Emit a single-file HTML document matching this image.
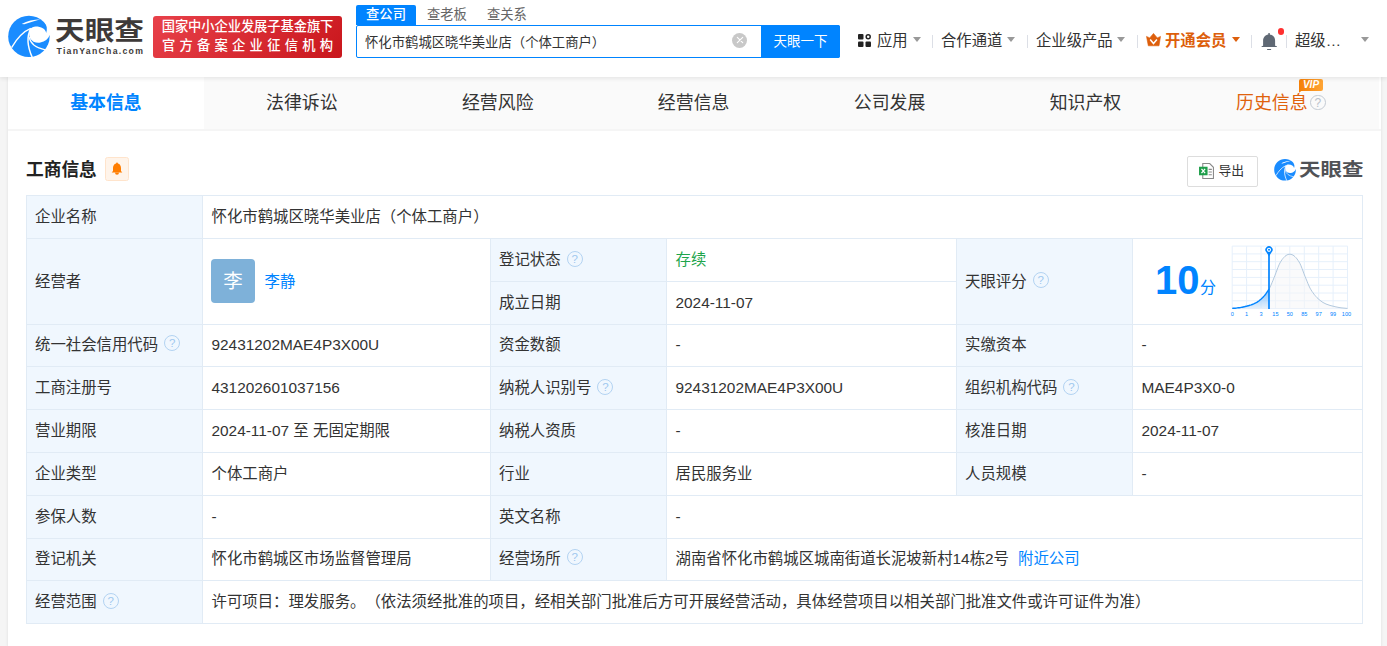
<!DOCTYPE html>
<html lang="zh-CN">
<head>
<meta charset="utf-8">
<title>天眼查</title>
<style>
*{box-sizing:border-box;margin:0;padding:0}
html,body{width:1387px;height:646px;overflow:hidden;background:#f5f5f5}
body{text-spacing-trim:space-all;font-family:"Liberation Sans","Noto Sans CJK SC",sans-serif;color:#333;font-size:14px;position:relative}
.abs{position:absolute}
#header{position:absolute;left:0;top:0;width:1387px;height:77px;background:#fff;box-shadow:0 2px 4px rgba(0,0,0,.08);z-index:5}
#main{position:absolute;left:8px;top:77px;width:1373px;height:570px;background:#fff;box-shadow:0 0 3px rgba(0,0,0,.10)}
.t{position:absolute;white-space:nowrap;line-height:20px}
/* header */
.logo-cn{left:54.7px;top:12.8px;font-size:29.5px;font-weight:700;color:#3e3a39;line-height:36px;letter-spacing:0px;transform:scale(1.005,.87);transform-origin:0 50%}
.logo-en{left:56.5px;top:44.8px;font-size:8.7px;font-weight:700;color:#3e3a39;line-height:12px;letter-spacing:1.27px}
.badge{left:153px;top:16px;width:189px;height:42px;border-radius:3px;background:linear-gradient(135deg,#e8414a 0%,#c9161c 100%);color:#fff}
.badge div{position:absolute;left:0;width:189px;text-align:center;white-space:nowrap;font-size:13.3px;line-height:16px;font-weight:500}
.stab{top:5px;height:20px;line-height:19.5px;font-size:13.3px;color:#666}
.stab.on{left:356px;width:60px;background:#0084ff;color:#fff;text-align:center;border-radius:2px 2px 0 0;font-weight:500}
.sbox{left:356px;top:25px;width:484px;height:33px;border:1.5px solid #0084ff;border-radius:2px;background:#fff}
.sbtn{left:761px;top:25px;width:79px;height:33px;background:#0084ff;color:#fff;font-size:13.5px;line-height:33px;text-align:center;border-radius:0 2px 2px 0}
.nav{top:31px;font-size:15.35px;color:#333;line-height:20px}
.sep{top:34.5px;width:1px;height:13px;background:#dcdfe6}
.caret{width:0;height:0;border-left:4px solid transparent;border-right:4px solid transparent;border-top:5px solid #999}
/* tabs */
.tab{top:77px;height:51.7px;width:196px;background:#fafafa;text-align:center;font-size:17.9px;line-height:52px;color:#333}
.tab.on{background:#fff;color:#0084ff;font-weight:700}
/* table */
.cell{position:absolute;border:1px solid #e1ebf5;background:#fff}
.lab{background:#f0f7fe}
.cell .t{font-size:15.4px;line-height:20px;color:#333}
.q{display:inline-block;width:16px;height:16px;border:1.3px solid #b3d3f2;border-radius:50%;color:#9fc8ef;font-size:11.5px;line-height:15.6px;text-align:center;vertical-align:0px;position:relative;top:-2.5px;margin-left:6px;font-family:"Liberation Sans",sans-serif}
a{color:#0084ff;text-decoration:none}
</style>
</head>
<body>
<div id="header">
  <svg class="abs" style="left:4px;top:12px" width="52" height="50" viewBox="0 0 672 646">
    <circle cx="322" cy="315" r="268" fill="#1a8cff"/>
    <path d="M545 272 C538 215 480 186 410 186 C380 186 355 200 340 215 C322 260 322 300 335 335 C360 385 420 405 470 395 C530 385 570 350 592 298 L620 298 L620 130 L530 140 C555 175 561 225 545 272 Z" fill="#fff"/>
    <path d="M228 154 C300 114 380 96 472 92 C400 112 330 136 262 158 Z" fill="#fff"/>
    <path d="M98 460 C150 370 230 260 346 212" stroke="#fff" stroke-width="18" fill="none"/>
    <path d="M346 214 C300 300 290 420 366 588" stroke="#fff" stroke-width="19" fill="none"/>
    <path d="M325 325 C345 420 430 470 532 488" stroke="#fff" stroke-width="16" fill="none"/>
  </svg>
  <div class="t logo-cn">天眼查</div>
  <div class="t logo-en">TianYanCha.com</div>
  <div class="abs badge">
    <div style="top:3px;letter-spacing:-.1px">国家中小企业发展子基金旗下</div>
    <div style="top:21.5px;letter-spacing:4.25px;padding-left:4.25px">官方备案企业征信机构</div>
  </div>
  <div class="t stab on">查公司</div>
  <div class="t stab" style="left:427px">查老板</div>
  <div class="t stab" style="left:487px">查关系</div>
  <div class="abs sbox"></div>
  <div class="t" style="left:365px;top:32.5px;font-size:13.35px;color:#333">怀化市鹤城区晓华美业店（个体工商户）</div>
  <div class="abs" style="left:731.8px;top:32.7px;width:15.4px;height:15.4px;border-radius:50%;background:#c8c8c8"></div>
  <svg class="abs" style="left:731.5px;top:32.4px" width="16" height="16" viewBox="0 0 16 16"><path d="M5.3 5.3 L10.7 10.7 M10.7 5.3 L5.3 10.7" stroke="#fff" stroke-width="1.1" stroke-linecap="round"/></svg>
  <div class="t sbtn">天眼一下</div>

  <svg class="abs" style="left:858px;top:34px" width="13" height="13" viewBox="0 0 13 13">
    <rect x="0" y="0" width="5.5" height="5.5" rx="1" fill="#222"/>
    <rect x="0" y="7.5" width="5.5" height="5.5" rx="1" fill="#222"/>
    <rect x="7.5" y="7.5" width="5.5" height="5.5" rx="1" fill="#222"/>
    <circle cx="10.2" cy="2.8" r="2" fill="none" stroke="#222" stroke-width="1.5"/>
  </svg>
  <div class="t nav" style="left:877px">应用</div>
  <div class="abs caret" style="left:913px;top:37.3px"></div>
  <div class="abs sep" style="left:932px"></div>
  <div class="t nav" style="left:941px">合作通道</div>
  <div class="abs caret" style="left:1007px;top:37.3px"></div>
  <div class="abs sep" style="left:1027px"></div>
  <div class="t nav" style="left:1036px">企业级产品</div>
  <div class="abs caret" style="left:1117px;top:37.3px"></div>
  <div class="abs sep" style="left:1137px"></div>
  <svg class="abs" style="left:1146px;top:33px" width="15" height="14" viewBox="0 0 15 14">
    <path d="M.5 3.4 L3.7 4.9 L7.5 .4 L11.3 4.9 L14.5 3.4 L13 12.8 L2.3 12.8 Z" fill="#dd5f0c" stroke="#dd5f0c" stroke-width=".6" stroke-linejoin="round"/>
    <path d="M4.2 6.5 L7.5 10.5 L10.9 6.5" stroke="#fff" stroke-width="1.5" fill="none"/>
  </svg>
  <div class="t nav" style="left:1165px;color:#dd5f0c;font-weight:700">开通会员</div>
  <div class="abs caret" style="left:1232px;top:37.3px;border-top-color:#dd5f0c"></div>
  <div class="abs sep" style="left:1251px"></div>
  <svg class="abs" style="left:1260px;top:32px" width="18" height="20" viewBox="0 0 18 20">
    <path d="M9.1 2.4 C5.6 2.4 3.1 5 3.1 8.5 L3.1 13.8 L1.6 14.3 L1.6 15.1 L16.9 15.1 L16.9 14.3 L15.1 13.8 L15.1 8.5 C15.1 5 12.6 2.4 9.1 2.4 Z" fill="#5f6874"/>
    <rect x="8.3" y="1" width="1.6" height="2.4" rx=".6" fill="#5f6874"/>
    <rect x="7" y="16.9" width="4.2" height="1.1" rx=".5" fill="#5f6874"/>
  </svg>
  <div class="abs" style="left:1277.9px;top:28.4px;width:6.2px;height:6.2px;border-radius:50%;background:#ff3030"></div>
  <div class="abs sep" style="left:1286px"></div>
  <div class="t nav" style="left:1295px">超级…</div>
  <div class="abs caret" style="left:1361px;top:37.3px"></div>
</div>

<div id="main"></div>

<!-- tabs -->
<div class="abs" style="left:8px;top:128.7px;width:1373px;height:2.2px;background:#f5f5f5"></div>
<div class="t tab" style="left:203.9px;width:1174.9px"></div>
<div class="t tab on" style="left:8.0px;width:195.9px">基本信息</div>
<div class="t tab" style="left:203.9px;width:195.9px;background:none">法律诉讼</div>
<div class="t tab" style="left:399.8px;width:195.9px;background:none">经营风险</div>
<div class="t tab" style="left:595.7px;width:195.9px;background:none">经营信息</div>
<div class="t tab" style="left:791.6px;width:195.9px;background:none">公司发展</div>
<div class="t tab" style="left:987.5px;width:195.9px;background:none">知识产权</div>
<div class="t tab" style="left:1236px;width:auto;background:none;color:#e0620d">历史信息</div>
<div class="abs" style="left:1310px;top:94.6px;width:15.6px;height:15.6px;border:1.4px solid #c3cad3;border-radius:50%;color:#b7c0ca;font-size:12px;line-height:15.4px;text-align:center">?</div>
<div class="abs" style="left:1299px;top:79px;width:24px;height:12px;background:linear-gradient(90deg,#f57f06,#ffa535);border-radius:2px 2px 2px 0;color:#fff;font-size:10px;line-height:12px;text-align:center;font-weight:700;font-style:italic">VIP</div>

<svg class="abs" style="left:1299px;top:90px" width="4" height="3" viewBox="0 0 4 3"><path d="M0 0 H3.6 L0 2.8 Z" fill="#f57f06"/></svg>
<!-- section title -->
<div class="t" style="left:26px;top:158px;font-size:17.7px;font-weight:700;color:#222;line-height:24px">工商信息</div>
<div class="abs" style="left:105px;top:157px;width:24px;height:24px;border:1px solid #ffe4cc;background:#fff4ea;border-radius:2.5px"></div>
<svg class="abs" style="left:110.6px;top:162.2px" width="12" height="14" viewBox="0 0 12 14">
  <path d="M6 .5 C6.6 .5 6.9 .9 6.9 1.4 C9 1.9 10 3.8 10 5.9 L10 9 L11.3 10.6 L.7 10.6 L2 9 L2 5.9 C2 3.8 3 1.9 5.1 1.4 C5.1 .9 5.4 .5 6 .5 Z" fill="#ff7d00"/>
  <path d="M4 10.6 A2 2.2 0 0 0 8 10.6 Z" fill="#ff7d00"/>
</svg>

<div class="abs" style="left:1187px;top:156px;width:71px;height:31px;border:1px solid #ddd;border-radius:2px;background:#fff"></div>
<svg class="abs" style="left:1198.8px;top:163px" width="15" height="16" viewBox="0 0 14 15">
  <path d="M3.5 .5 L10 .5 L13.5 4 L13.5 14.5 L3.5 14.5 Z" fill="#fff" stroke="#888" stroke-width="1"/>
  <path d="M9 6 h3 M9 8.5 h3 M9 11 h3" stroke="#888" stroke-width="1"/>
  <rect x="0" y="3.5" width="8" height="8" fill="#1e9e4a"/>
  <path d="M2.3 5.5 L5.7 9.5 M5.7 5.5 L2.3 9.5" stroke="#fff" stroke-width="1.2"/>
</svg>
<div class="t" style="left:1218.5px;top:161px;font-size:12.8px;color:#333">导出</div>

<svg class="abs" style="left:1272.17px;top:156.50px" width="27.21" height="26.15" viewBox="0 0 672 646">
    <circle cx="322" cy="315" r="268" fill="#1a8cff"/>
    <path d="M545 272 C538 215 480 186 410 186 C380 186 355 200 340 215 C322 260 322 300 335 335 C360 385 420 405 470 395 C530 385 570 350 592 298 L620 298 L620 130 L530 140 C555 175 561 225 545 272 Z" fill="#fff"/>
    <path d="M228 154 C300 114 380 96 472 92 C400 112 330 136 262 158 Z" fill="#fff"/>
    <path d="M98 460 C150 370 230 260 346 212" stroke="#fff" stroke-width="18" fill="none"/>
    <path d="M346 214 C300 300 290 420 366 588" stroke="#fff" stroke-width="19" fill="none"/>
    <path d="M325 325 C345 420 430 470 532 488" stroke="#fff" stroke-width="16" fill="none"/>
  </svg>
<div class="t" style="left:1299px;top:157.4px;font-size:21.5px;font-weight:700;color:#505256;line-height:26px;transform:scaleY(.84);transform-origin:0 50%">天眼查</div>

<!-- table -->
<div id="tbl">
<div class="cell lab" style="left:26px;top:195px;width:177px;height:44px"><div class="t" style="left:8px;top:11.0px">企业名称</div></div>
<div class="cell" style="left:202px;top:195px;width:1161px;height:44px"><div class="t" style="left:8.5px;top:11.0px">怀化市鹤城区晓华美业店（个体工商户）</div></div>
<div class="cell lab" style="left:26px;top:238px;width:177px;height:87px"><div class="t" style="left:8px;top:32.5px">经营者</div></div>
<div class="cell" style="left:202px;top:238px;width:289px;height:87px"><div class="abs" style="left:8px;top:20px;width:44px;height:44px;border-radius:4px;background:#7eb1d9;color:#fff;font-size:19.5px;line-height:44px;text-align:center">李</div><div class="t" style="left:61.5px;top:32.5px"><a>李静</a></div></div>
<div class="cell lab" style="left:490px;top:238px;width:177px;height:44px"><div class="t" style="left:8px;top:11.0px">登记状态<span class="q">?</span></div></div>
<div class="cell" style="left:666px;top:238px;width:291px;height:44px"><div class="t" style="left:8.5px;top:11.0px"><span style="color:#1ea54c">存续</span></div></div>
<div class="cell lab" style="left:490px;top:281px;width:177px;height:44px"><div class="t" style="left:8px;top:11.0px">成立日期</div></div>
<div class="cell" style="left:666px;top:281px;width:291px;height:44px"><div class="t" style="left:8.5px;top:11.0px">2024-11-07</div></div>
<div class="cell lab" style="left:956px;top:238px;width:177px;height:87px"><div class="t" style="left:8px;top:32.5px">天眼评分<span class="q">?</span></div></div>
<div class="cell" style="left:1132px;top:238px;width:231px;height:87px"></div>
<div class="cell lab" style="left:26px;top:324px;width:177px;height:43px"><div class="t" style="left:8px;top:9.5px">统一社会信用代码<span class="q">?</span></div></div>
<div class="cell" style="left:202px;top:324px;width:289px;height:43px"><div class="t" style="left:8.5px;top:9.5px">92431202MAE4P3X00U</div></div>
<div class="cell lab" style="left:490px;top:324px;width:177px;height:43px"><div class="t" style="left:8px;top:9.5px">资金数额</div></div>
<div class="cell" style="left:666px;top:324px;width:291px;height:43px"><div class="t" style="left:8.5px;top:9.5px">-</div></div>
<div class="cell lab" style="left:956px;top:324px;width:177px;height:43px"><div class="t" style="left:8px;top:9.5px">实缴资本</div></div>
<div class="cell" style="left:1132px;top:324px;width:231px;height:43px"><div class="t" style="left:8.5px;top:9.5px">-</div></div>
<div class="cell lab" style="left:26px;top:366px;width:177px;height:44px"><div class="t" style="left:8px;top:11.0px">工商注册号</div></div>
<div class="cell" style="left:202px;top:366px;width:289px;height:44px"><div class="t" style="left:8.5px;top:11.0px">431202601037156</div></div>
<div class="cell lab" style="left:490px;top:366px;width:177px;height:44px"><div class="t" style="left:8px;top:11.0px">纳税人识别号<span class="q">?</span></div></div>
<div class="cell" style="left:666px;top:366px;width:291px;height:44px"><div class="t" style="left:8.5px;top:11.0px">92431202MAE4P3X00U</div></div>
<div class="cell lab" style="left:956px;top:366px;width:177px;height:44px"><div class="t" style="left:8px;top:11.0px">组织机构代码<span class="q">?</span></div></div>
<div class="cell" style="left:1132px;top:366px;width:231px;height:44px"><div class="t" style="left:8.5px;top:11.0px">MAE4P3X0-0</div></div>
<div class="cell lab" style="left:26px;top:409px;width:177px;height:44px"><div class="t" style="left:8px;top:11.0px">营业期限</div></div>
<div class="cell" style="left:202px;top:409px;width:289px;height:44px"><div class="t" style="left:8.5px;top:11.0px">2024-11-07 至 无固定期限</div></div>
<div class="cell lab" style="left:490px;top:409px;width:177px;height:44px"><div class="t" style="left:8px;top:11.0px">纳税人资质</div></div>
<div class="cell" style="left:666px;top:409px;width:291px;height:44px"><div class="t" style="left:8.5px;top:11.0px">-</div></div>
<div class="cell lab" style="left:956px;top:409px;width:177px;height:44px"><div class="t" style="left:8px;top:11.0px">核准日期</div></div>
<div class="cell" style="left:1132px;top:409px;width:231px;height:44px"><div class="t" style="left:8.5px;top:11.0px">2024-11-07</div></div>
<div class="cell lab" style="left:26px;top:452px;width:177px;height:44px"><div class="t" style="left:8px;top:11.0px">企业类型</div></div>
<div class="cell" style="left:202px;top:452px;width:289px;height:44px"><div class="t" style="left:8.5px;top:11.0px">个体工商户</div></div>
<div class="cell lab" style="left:490px;top:452px;width:177px;height:44px"><div class="t" style="left:8px;top:11.0px">行业</div></div>
<div class="cell" style="left:666px;top:452px;width:291px;height:44px"><div class="t" style="left:8.5px;top:11.0px">居民服务业</div></div>
<div class="cell lab" style="left:956px;top:452px;width:177px;height:44px"><div class="t" style="left:8px;top:11.0px">人员规模</div></div>
<div class="cell" style="left:1132px;top:452px;width:231px;height:44px"><div class="t" style="left:8.5px;top:11.0px">-</div></div>
<div class="cell lab" style="left:26px;top:495px;width:177px;height:44px"><div class="t" style="left:8px;top:11.0px">参保人数</div></div>
<div class="cell" style="left:202px;top:495px;width:289px;height:44px"><div class="t" style="left:8.5px;top:11.0px">-</div></div>
<div class="cell lab" style="left:490px;top:495px;width:177px;height:44px"><div class="t" style="left:8px;top:11.0px">英文名称</div></div>
<div class="cell" style="left:666px;top:495px;width:697px;height:44px"><div class="t" style="left:8.5px;top:11.0px">-</div></div>
<div class="cell lab" style="left:26px;top:538px;width:177px;height:43px"><div class="t" style="left:8px;top:9.5px">登记机关</div></div>
<div class="cell" style="left:202px;top:538px;width:289px;height:43px"><div class="t" style="left:8.5px;top:9.5px">怀化市鹤城区市场监督管理局</div></div>
<div class="cell lab" style="left:490px;top:538px;width:177px;height:43px"><div class="t" style="left:8px;top:9.5px">经营场所<span class="q">?</span></div></div>
<div class="cell" style="left:666px;top:538px;width:697px;height:43px"><div class="t" style="left:8.5px;top:9.5px">湖南省怀化市鹤城区城南街道长泥坡新村14栋2号<a style="margin-left:9px">附近公司</a></div></div>
<div class="cell lab" style="left:26px;top:580px;width:177px;height:44px"><div class="t" style="left:8px;top:11.0px">经营范围<span class="q">?</span></div></div>
<div class="cell" style="left:202px;top:580px;width:1161px;height:44px"><div class="t" style="left:8.5px;top:11.0px">许可项目：理发服务<span style="display:inline-block;width:1em">。</span>（依法须经批准的项目，经相关部门批准后方可开展经营活动，具体经营项目以相关部门批准文件或许可证件为准）</div></div>
<div class="t" style="left:1155px;top:257px;font-size:40px;font-weight:700;color:#0084ff;line-height:46px;font-family:'Liberation Sans',sans-serif">10</div><div class="t" style="left:1200px;top:278px;font-size:16px;color:#0084ff;line-height:20px">分</div>
<svg class="abs" style="left:1225px;top:240px" width="135" height="82" viewBox="1225 240 135 82">
<defs><linearGradient id="gb" x1="0" y1="0" x2="0" y2="1"><stop offset="0" stop-color="#0084ff" stop-opacity=".45"/><stop offset="1" stop-color="#0084ff" stop-opacity=".08"/></linearGradient></defs>
<path d="M1232.2 246.1 V308.6 M1232.2 246.1 H1347.5 M1246.6 246.1 V308.6 M1232.2 253.9 H1347.5 M1261.0 246.1 V308.6 M1232.2 261.7 H1347.5 M1275.4 246.1 V308.6 M1232.2 269.5 H1347.5 M1289.8 246.1 V308.6 M1232.2 277.4 H1347.5 M1304.3 246.1 V308.6 M1232.2 285.2 H1347.5 M1318.7 246.1 V308.6 M1232.2 293.0 H1347.5 M1333.1 246.1 V308.6 M1232.2 300.8 H1347.5 M1347.5 246.1 V308.6 M1232.2 308.6 H1347.5" stroke="#e6f0fb" stroke-width="1" fill="none"/>
<path d="M1232.2 308.4 L1233.2 308.3 L1234.2 308.2 L1235.2 308.2 L1236.2 308.1 L1237.2 307.9 L1238.2 307.8 L1239.2 307.7 L1240.2 307.6 L1241.2 307.4 L1242.2 307.2 L1243.2 307.0 L1244.2 306.8 L1245.2 306.5 L1246.2 306.3 L1247.2 306.0 L1248.2 305.8 L1249.2 305.5 L1250.2 305.2 L1251.2 304.9 L1252.2 304.5 L1253.2 304.1 L1254.2 303.7 L1255.2 303.2 L1256.2 302.7 L1257.2 302.1 L1258.2 301.4 L1259.2 300.7 L1260.2 299.8 L1261.2 299.0 L1262.2 298.1 L1263.2 297.0 L1264.2 295.9 L1265.2 294.7 L1266.2 293.4 L1267.2 291.9 L1268.2 290.4 L1269.2 288.8 L1270.2 286.9 L1271.2 284.7 L1272.2 282.2 L1273.2 279.8 L1274.2 277.3 L1275.2 274.8 L1276.2 272.1 L1277.2 269.4 L1278.2 266.8 L1279.2 264.5 L1280.2 262.5 L1281.2 260.9 L1282.2 259.4 L1283.2 258.1 L1284.2 257.0 L1285.2 256.1 L1286.2 255.4 L1287.2 254.8 L1288.2 254.5 L1289.2 254.2 L1290.2 254.2 L1291.2 254.4 L1292.2 254.7 L1293.2 255.2 L1294.2 256.0 L1295.2 256.9 L1296.2 257.9 L1297.2 259.2 L1298.2 260.6 L1299.2 262.2 L1300.2 264.0 L1301.2 266.3 L1302.2 268.9 L1303.2 271.6 L1304.2 274.3 L1305.2 276.8 L1306.2 279.3 L1307.2 281.7 L1308.2 284.2 L1309.2 286.5 L1310.2 288.4 L1311.2 290.1 L1312.2 291.7 L1313.2 293.1 L1314.2 294.4 L1315.2 295.7 L1316.2 296.8 L1317.2 297.9 L1318.2 298.8 L1319.2 299.7 L1320.2 300.5 L1321.2 301.3 L1322.2 302.0 L1323.2 302.6 L1324.2 303.1 L1325.2 303.6 L1326.2 304.0 L1327.2 304.4 L1328.2 304.8 L1329.2 305.1 L1330.2 305.4 L1331.2 305.7 L1332.2 306.0 L1333.2 306.2 L1334.2 306.5 L1335.2 306.7 L1336.2 307.0 L1337.2 307.2 L1338.2 307.4 L1339.2 307.5 L1340.2 307.7 L1341.2 307.8 L1342.2 307.9 L1343.2 308.0 L1344.2 308.1 L1345.2 308.2 L1346.2 308.3 L1347.2 308.4 L1347.5 308.4 L1347.5 308.6 L1232.2 308.6 Z" fill="#f5f6f8" fill-opacity=".5"/>
<path d="M1269.0 289.1 L1270.0 287.3 L1271.0 285.1 L1272.0 282.7 L1273.0 280.3 L1274.0 277.8 L1275.0 275.3 L1276.0 272.7 L1277.0 270.0 L1278.0 267.3 L1279.0 264.9 L1280.0 262.9 L1281.0 261.2 L1282.0 259.7 L1283.0 258.4 L1284.0 257.3 L1285.0 256.3 L1286.0 255.5 L1287.0 254.9 L1288.0 254.5 L1289.0 254.3 L1290.0 254.2 L1291.0 254.4 L1292.0 254.7 L1293.0 255.1 L1294.0 255.8 L1295.0 256.7 L1296.0 257.7 L1297.0 258.9 L1298.0 260.3 L1299.0 261.9 L1300.0 263.6 L1301.0 265.8 L1302.0 268.4 L1303.0 271.0 L1304.0 273.8 L1305.0 276.3 L1306.0 278.8 L1307.0 281.2 L1308.0 283.7 L1309.0 286.0 L1310.0 288.1 L1311.0 289.8 L1312.0 291.4 L1313.0 292.8 L1314.0 294.2 L1315.0 295.4 L1316.0 296.6 L1317.0 297.7 L1318.0 298.6 L1319.0 299.5 L1320.0 300.3 L1321.0 301.1 L1322.0 301.8 L1323.0 302.5 L1324.0 303.0 L1325.0 303.5 L1326.0 304.0 L1327.0 304.4 L1328.0 304.7 L1329.0 305.1 L1330.0 305.4 L1331.0 305.7 L1332.0 305.9 L1333.0 306.2 L1334.0 306.4 L1335.0 306.7 L1336.0 306.9 L1337.0 307.1 L1338.0 307.3 L1339.0 307.5 L1340.0 307.6 L1341.0 307.8 L1342.0 307.9 L1343.0 308.0 L1344.0 308.1 L1345.0 308.2 L1346.0 308.3 L1347.0 308.4 L1347.5 308.4" stroke="#b3c9de" stroke-width="1" fill="none"/>
<path d="M1232.2 308.4 L1233.2 308.3 L1234.2 308.2 L1235.2 308.2 L1236.2 308.1 L1237.2 307.9 L1238.2 307.8 L1239.2 307.7 L1240.2 307.6 L1241.2 307.4 L1242.2 307.2 L1243.2 307.0 L1244.2 306.8 L1245.2 306.5 L1246.2 306.3 L1247.2 306.0 L1248.2 305.8 L1249.2 305.5 L1250.2 305.2 L1251.2 304.9 L1252.2 304.5 L1253.2 304.1 L1254.2 303.7 L1255.2 303.2 L1256.2 302.7 L1257.2 302.1 L1258.2 301.4 L1259.2 300.7 L1260.2 299.8 L1261.2 299.0 L1262.2 298.1 L1263.2 297.0 L1264.2 295.9 L1265.2 294.7 L1266.2 293.4 L1267.2 291.9 L1268.2 290.4 L1269.0 289.1 L1269.0 308.6 L1232.2 308.6 Z" fill="url(#gb)"/>
<path d="M1232.2 308.4 L1233.2 308.3 L1234.2 308.2 L1235.2 308.2 L1236.2 308.1 L1237.2 307.9 L1238.2 307.8 L1239.2 307.7 L1240.2 307.6 L1241.2 307.4 L1242.2 307.2 L1243.2 307.0 L1244.2 306.8 L1245.2 306.5 L1246.2 306.3 L1247.2 306.0 L1248.2 305.8 L1249.2 305.5 L1250.2 305.2 L1251.2 304.9 L1252.2 304.5 L1253.2 304.1 L1254.2 303.7 L1255.2 303.2 L1256.2 302.7 L1257.2 302.1 L1258.2 301.4 L1259.2 300.7 L1260.2 299.8 L1261.2 299.0 L1262.2 298.1 L1263.2 297.0 L1264.2 295.9 L1265.2 294.7 L1266.2 293.4 L1267.2 291.9 L1268.2 290.4 L1269.0 289.1" stroke="#0084ff" stroke-width="1.4" fill="none"/>
<path d="M1269.0 254 V309.0" stroke="#0084ff" stroke-width="1.7"/>
<path d="M1269.0 256.2 L1266.4 252.3 A3.6 3.6 0 1 1 1271.6 252.3 Z" fill="#0084ff"/>
<circle cx="1269.0" cy="249.8" r="2.1" fill="#fff"/><circle cx="1269.0" cy="249.8" r="1" fill="#0084ff"/>
<text x="1232.2" y="316.2" font-size="5.6" fill="#0084ff" text-anchor="middle" font-family="Liberation Sans,sans-serif">0</text>
<text x="1246.6" y="316.2" font-size="5.6" fill="#0084ff" text-anchor="middle" font-family="Liberation Sans,sans-serif">1</text>
<text x="1261.0" y="316.2" font-size="5.6" fill="#0084ff" text-anchor="middle" font-family="Liberation Sans,sans-serif">3</text>
<text x="1275.4" y="316.2" font-size="5.6" fill="#0084ff" text-anchor="middle" font-family="Liberation Sans,sans-serif">15</text>
<text x="1289.8" y="316.2" font-size="5.6" fill="#0084ff" text-anchor="middle" font-family="Liberation Sans,sans-serif">50</text>
<text x="1304.3" y="316.2" font-size="5.6" fill="#0084ff" text-anchor="middle" font-family="Liberation Sans,sans-serif">85</text>
<text x="1318.7" y="316.2" font-size="5.6" fill="#0084ff" text-anchor="middle" font-family="Liberation Sans,sans-serif">97</text>
<text x="1333.1" y="316.2" font-size="5.6" fill="#0084ff" text-anchor="middle" font-family="Liberation Sans,sans-serif">99</text>
<text x="1346.5" y="316.2" font-size="5.6" fill="#0084ff" text-anchor="middle" font-family="Liberation Sans,sans-serif">100</text>
</svg>
</div>
</body>
</html>
